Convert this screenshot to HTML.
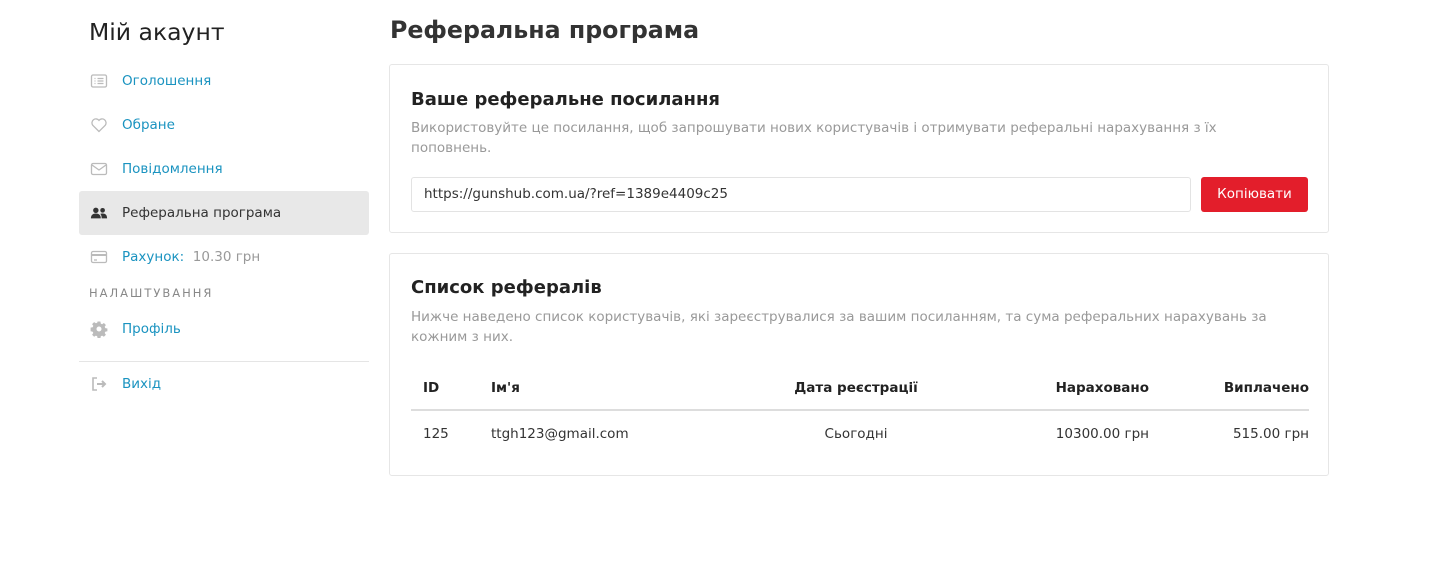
<!DOCTYPE html>
<html><head><meta charset="utf-8"><style>
*{box-sizing:border-box;margin:0;padding:0}
body{width:1436px;height:561px;background:#fff;font-family:"DejaVu Sans","Liberation Sans",sans-serif;font-size:13.5px;color:#333;position:relative;overflow:hidden}
.side{position:absolute;left:79px;top:0;width:290px}
.side h2{font-weight:normal;font-size:23.5px;position:absolute;left:10px;top:18px;color:#222;font-family:"DejaVu Sans",sans-serif}
.item{position:absolute;left:0;width:290px;height:44px;display:flex;align-items:center;padding-left:11px;color:#1a93c0}
.item svg{width:18px;height:18px;margin-right:14px}
.item.act{background:#e8e8e8;border-radius:3px;color:#333}
.grey{color:#999}
.sec{position:absolute;left:10px;top:286px;font-size:11.5px;letter-spacing:2px;color:#888}
.hr{position:absolute;left:0;top:361px;width:290px;border-top:1px solid #e5e5e5}
h1{position:absolute;left:390px;top:16px;font-size:23.7px;font-weight:bold;color:#333}
.card{position:absolute;left:389px;width:940px;border:1px solid #e6e6e6;border-radius:3px}
.card h3{position:absolute;left:21px;font-size:18px;font-weight:bold;color:#222}
.card p{position:absolute;left:21px;width:880px;color:#999;font-size:13.5px;line-height:20px}
.inp{position:absolute;left:21px;top:112px;width:780px;height:35px;border:1px solid #e3e3e3;border-radius:3px;padding-left:12px;line-height:33px;color:#333}
.btn{position:absolute;left:811px;top:112px;width:107px;height:35px;background:#e31e2b;color:#fff;border-radius:3px;text-align:center;line-height:35px}
table{position:absolute;left:21px;top:112px;width:898px;border-collapse:collapse}
th{font-weight:bold;height:44px;border-bottom:2px solid #ddd;color:#222}
td{height:46px}
.c1{padding-left:12px}
</style></head><body>
<div class="side">
<h2>Мій акаунт</h2>
<div class="item" style="top:59px"><svg viewBox="0 0 18 18" fill="none" stroke="#bbb" stroke-width="1.3"><rect x="1.5" y="3" width="15" height="12" rx="1.5"/><path d="M4.5 6.5h1M4.5 9h1M4.5 11.5h1M7.5 6.5h6M7.5 9h6M7.5 11.5h6"/></svg>Оголошення</div>
<div class="item" style="top:103px"><svg viewBox="0 0 18 18" fill="none" stroke="#bbb" stroke-width="1.3"><path d="M9 15.5L2.8 9.3A3.6 3.6 0 0 1 9 4.4a3.6 3.6 0 0 1 6.2 4.9z"/></svg>Обране</div>
<div class="item" style="top:147px"><svg viewBox="0 0 18 18" fill="none" stroke="#bbb" stroke-width="1.3"><rect x="1.5" y="3.5" width="15" height="11" rx="1.5"/><path d="M2 5l7 5 7-5"/></svg>Повідомлення</div>
<div class="item act" style="top:191px"><svg viewBox="0 0 20 18" fill="#333"><circle cx="6.5" cy="6" r="3"/><circle cx="14" cy="6" r="2.6"/><path d="M1 15c0-4 2.5-5.5 5.5-5.5S12 11 12 15z"/><path d="M13 15c0-2.5-.6-4-1.6-5 .8-.4 1.6-.5 2.6-.5 3 0 5 1.5 5 5.5z"/></svg>Реферальна програма</div>
<div class="item" style="top:235px"><svg viewBox="0 0 18 18" fill="none" stroke="#bbb" stroke-width="1.3"><rect x="1.5" y="3.5" width="15" height="11" rx="1.5"/><path d="M1.5 7h15" stroke-width="2"/><path d="M4 12h3"/></svg>Рахунок:&nbsp;&nbsp;<span class="grey">10.30 грн</span></div>
<div class="sec">НАЛАШТУВАННЯ</div>
<div class="item" style="top:307px"><svg viewBox="0 0 18 18" fill="#bbb"><path d="M7.6 1.5h2.8l.4 2.1 1.3.6 1.8-1.2 2 2-1.2 1.8.6 1.3 2.1.4v2.8l-2.1.4-.6 1.3 1.2 1.8-2 2-1.8-1.2-1.3.6-.4 2.1H7.6l-.4-2.1-1.3-.6-1.8 1.2-2-2 1.2-1.8-.6-1.3-2.1-.4V7.6l2.1-.4.6-1.3-1.2-1.8 2-2 1.8 1.2 1.3-.6zM9 6.5a2.5 2.5 0 1 0 0 5 2.5 2.5 0 0 0 0-5z"/></svg>Профіль</div>
<div class="hr"></div>
<div class="item" style="top:362px"><svg viewBox="0 0 18 18" fill="none" stroke="#bbb" stroke-width="1.6"><path d="M7 3H3v12h4"/><path d="M7 9h8M12 6l3 3-3 3" stroke-width="2"/></svg>Вихід</div>
</div>
<h1>Реферальна програма</h1>
<div class="card" style="top:64px;height:169px">
<h3 style="top:24px">Ваше реферальне посилання</h3>
<p style="top:53px">Використовуйте це посилання, щоб запрошувати нових користувачів і отримувати реферальні нарахування з їх поповнень.</p>
<div class="inp">https://gunshub.com.ua/?ref=1389e4409c25</div>
<div class="btn">Копіювати</div>
</div>
<div class="card" style="top:253px;height:223px">
<h3 style="top:23px">Список рефералів</h3>
<p style="top:53px">Нижче наведено список користувачів, які зареєструвалися за вашим посиланням, та сума реферальних нарахувань за кожним з них.</p>
<table>
<tr><th class="c1" style="text-align:left;width:80px">ID</th><th style="text-align:left;width:250px">Ім'я</th><th style="text-align:center;width:230px">Дата реєстрації</th><th style="text-align:right;width:178px">Нараховано</th><th style="text-align:right">Виплачено</th></tr>
<tr><td class="c1">125</td><td>ttgh123@gmail.com</td><td style="text-align:center">Сьогодні</td><td style="text-align:right">10300.00 грн</td><td style="text-align:right">515.00 грн</td></tr>
</table>
</div>
</body></html>
